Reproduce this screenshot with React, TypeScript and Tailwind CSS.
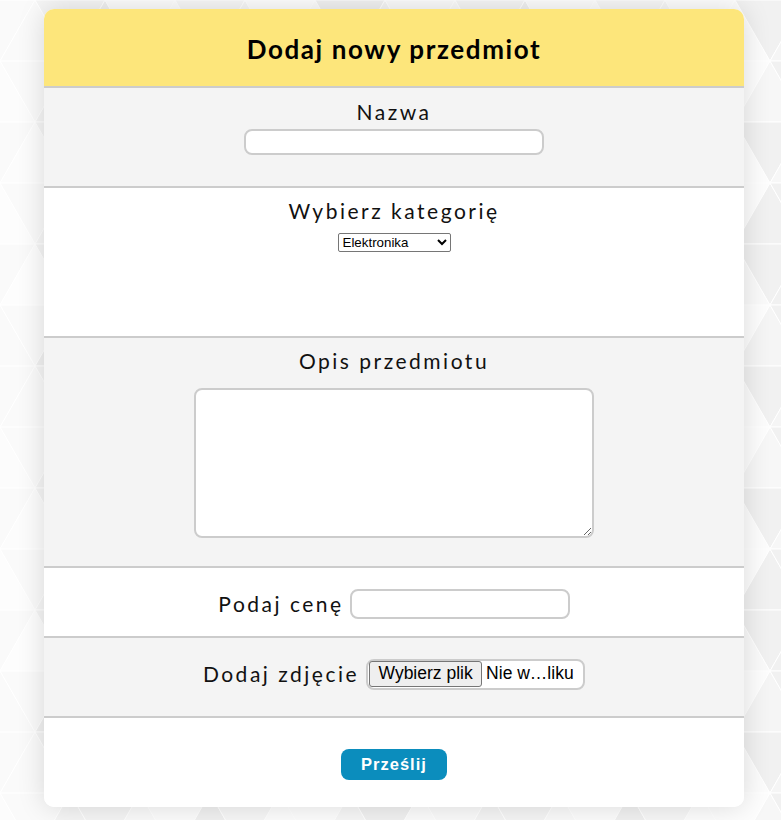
import React from "react";

function Background() {
  const tris: React.ReactNode[] = [];
  const w = 70;
  const h = 61;
  const fills = ["#f5f5f5", "#fafafa", "#f1f1f1", "#fdfdfd", "#f7f7f7", "#fcfcfc"];
  let k = 0;
  for (let r = 0; r < 15; r++) {
    for (let c = -1; c < 13; c++) {
      const off = r % 2 === 0 ? 0 : w / 2;
      const x = c * w + off;
      const y = r * h;
      const f1 = fills[(k * 7 + r * 3) % fills.length];
      const f2 = fills[(k * 5 + r * 2 + 1) % fills.length];
      k++;
      tris.push(
        <polygon key={`a${r}-${c}`} points={`${x},${y + h} ${x + w / 2},${y} ${x + w},${y + h}`} fill={f1} stroke="#ffffff" strokeWidth="1" />
      );
      tris.push(
        <polygon key={`b${r}-${c}`} points={`${x + w / 2},${y} ${x + w * 1.5},${y} ${x + w},${y + h}`} fill={f2} stroke="#ffffff" strokeWidth="1" />
      );
    }
  }
  return (
    <svg className="absolute inset-0 w-full h-full" width="781" height="820" aria-hidden="true">
      <rect width="781" height="820" fill="#f7f7f7" />
      {tris}
    </svg>
  );
}

const label = "text-[21px] leading-[24px] tracking-[2.5px] text-[#111]";

export default function App() {
  return (
    <div className="relative w-[781px] h-[820px] overflow-hidden" style={{ fontFamily: "Lato, 'Noto Sans', sans-serif" }}>
      <Background />
      <div className="relative pt-[9px] pl-[44px]">
        <form className="w-[700px] rounded-[10px] bg-white shadow-[0_0_28px_rgba(0,0,0,0.14)] overflow-hidden">
          <div className="h-[79px] bg-[#fde67b] border-b-2 border-[#cccccc] flex items-center justify-center pt-[4px]">
            <h1 className="text-[26px] font-bold tracking-[1.6px] text-black">Dodaj nowy przedmiot</h1>
          </div>

          <div className="h-[100px] bg-[#f4f4f4] border-b-2 border-[#cccccc] flex flex-col items-center pt-[12px]">
            <label className={label}>Nazwa</label>
            <input type="text" className="mt-[5px] w-[300px] h-[26px] bg-white border-2 border-[#cccccc] rounded-[8px] outline-none" />
          </div>

          <div className="h-[150px] bg-white border-b-2 border-[#cccccc] flex flex-col items-center pt-[11px]">
            <label className={label}>Wybierz kategorię</label>
            <select
              className="mt-[10px] w-[113px] h-[19px] border border-[#767676] rounded-[2px] bg-white text-[13.33px] text-black tracking-normal"
              style={{ fontFamily: "'Liberation Sans', Arial, sans-serif" }}
              defaultValue="Elektronika"
            >
              <option>Elektronika</option>
              <option>Odzież</option>
              <option>Książki</option>
            </select>
          </div>

          <div className="h-[230px] bg-[#f4f4f4] border-b-2 border-[#cccccc] flex flex-col items-center pt-[11px]">
            <label className={label}>Opis przedmiotu</label>
            <textarea className="mt-[15px] w-[400px] h-[150px] bg-white border-2 border-[#cccccc] rounded-[8px] outline-none resize" />
          </div>

          <div className="h-[70px] bg-white border-b-2 border-[#cccccc] flex items-center justify-center gap-[6px] pt-[4px]">
            <label className={label}>Podaj cenę</label>
            <input type="text" className="w-[220px] h-[30px] bg-white border-2 border-[#cccccc] rounded-[8px] outline-none" />
          </div>

          <div className="h-[80px] bg-[#f4f4f4] border-b-2 border-[#cccccc] flex items-center justify-center gap-[7px] pb-[6px]">
            <label className={label}>Dodaj zdjęcie</label>
            <div
              className="w-[219px] h-[31px] bg-white border-2 border-[#cccccc] rounded-[8px] flex items-center pl-[1px] text-[17.5px] text-black tracking-normal"
              style={{ fontFamily: "'Liberation Sans', Arial, sans-serif" }}
            >
              <span className="h-[26px] w-[113px] flex items-center justify-center bg-[#efefef] border border-[#767676] rounded-[3px] leading-none">Wybierz plik</span>
              <span className="ml-[4px] leading-none">Nie w…liku</span>
            </div>
          </div>

          <div className="h-[89px] bg-white flex justify-center pt-[31px]">
            <button
              type="button"
              className="w-[106px] h-[31px] bg-[#0b8dbd] rounded-[8px] text-white text-[16.5px] font-bold tracking-[1px]"
              style={{ fontFamily: "'Liberation Sans', Arial, sans-serif" }}
            >
              Prześlij
            </button>
          </div>
        </form>
      </div>
    </div>
  );
}
